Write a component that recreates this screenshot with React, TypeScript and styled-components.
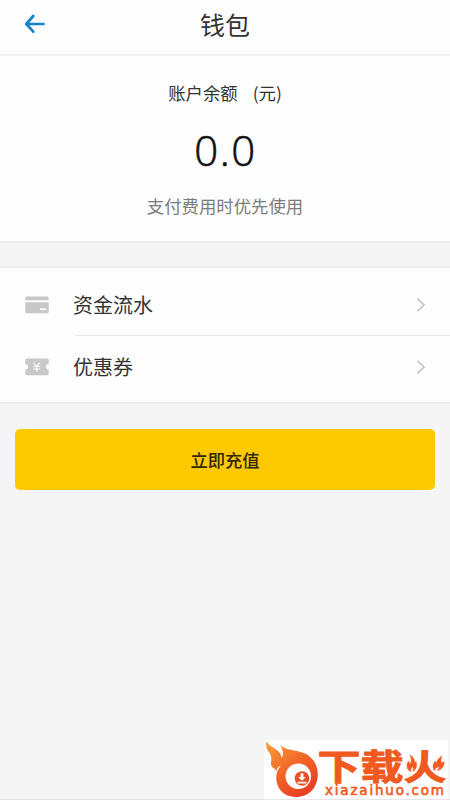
import React from "react";
import styled, { createGlobalStyle } from "styled-components";

const Global = createGlobalStyle`
  * { box-sizing: border-box; }
  body { margin: 0; background: #f5f5f5; font-family: "Noto Sans CJK SC", sans-serif; color: #333; }
`;

const Page = styled.main`
  position: relative;
  width: 450px;
  height: 800px;
  overflow: hidden;
  background: #f5f5f5;
  border-bottom: 1px solid #e6e6e6;
`;

const Header = styled.header`
  display: grid;
  grid-template-columns: 70px 1fr 70px;
  align-items: center;
  height: 56px;
  padding-bottom: 6px;
  background: #fdfdfd;
  border-bottom: 2px solid #f0f1f1;
`;

const BackButton = styled.button`
  display: flex;
  padding: 0 0 0 24px;
  border: 0;
  background: none;
`;

const Title = styled.h1`
  margin: 0;
  text-align: center;
  font-size: 25px;
  line-height: 36px;
  font-weight: 400;
`;

const Balance = styled.section`
  display: flex;
  flex-direction: column;
  align-items: center;
  height: 187px;
  padding-top: 24px;
  background: #fdfdfd;
  border-bottom: 2px solid #ececec;
`;

const BalanceLabel = styled.div`
  display: flex;
  gap: 15px;
  font-size: 17.4px;
  line-height: 26px;
`;

const Amount = styled.div`
  margin-top: 16px;
  font-family: "Open Sans", sans-serif;
  font-weight: 300;
  font-size: 42px;
  line-height: 56px;
  letter-spacing: 1.5px;
  padding-left: 1px;
  color: #111;
  -webkit-text-stroke: 0.6px #111;
`;

const Hint = styled.div`
  margin-top: 15px;
  font-size: 17.4px;
  line-height: 26px;
  color: #7c7c7c;
`;

const Menu = styled.nav`
  margin-top: 23px;
  height: 138px;
  background: #fdfdfd;
  border-top: 2px solid #ececec;
  border-bottom: 2px solid #ececec;
`;

const Row = styled.div<{ $height: number }>`
  display: flex;
  align-items: center;
  height: ${(p) => p.$height}px;
  padding-left: 25px;
`;

const RowBody = styled.div<{ $divided?: boolean }>`
  display: flex;
  flex: 1;
  align-items: center;
  justify-content: space-between;
  height: 100%;
  margin-left: 26px;
  padding: ${(p) => (p.$divided ? "7px" : "0")} 24px ${(p) => (p.$divided ? "0" : "5px")} 0;
  border-bottom: ${(p) => (p.$divided ? "1px solid #e8e8e8" : "0")};
`;

const RowIcon = styled.svg<{ $shift: number }>`
  flex: none;
  margin-top: ${(p) => p.$shift}px;
`;

const RowLabel = styled.span`
  margin-left: -2px;
  font-size: 20px;
  line-height: 30px;
`;

const RechargeButton = styled.button`
  display: block;
  width: 420px;
  height: 61px;
  margin: 25px 15px 0;
  padding: 0;
  border: 0;
  border-radius: 5px;
  background: #fdc900;
  color: #30260a;
  font-family: inherit;
  font-size: 17.3px;
  font-weight: 500;
`;

const Watermark = styled.div`
  position: absolute;
  right: 2px;
  bottom: 0;
  width: 184px;
  height: 59px;
  background: #fff;
`;

const Chevron = () => (
  <svg width="10" height="16" viewBox="0 0 10 16" fill="none" stroke="#c3c3c3" strokeWidth="1.7">
    <path d="M1.500 1.800 8 8l-6.500 6.200" />
  </svg>
);

const Logo = () => (
  <svg width="184" height="59" viewBox="264 740 184 59">
    <defs>
      <linearGradient id="fire" x1="0" y1="0" x2="0.65" y2="1">
        <stop offset="0" stopColor="#f9a13a" />
        <stop offset="0.5" stopColor="#f26a28" />
        <stop offset="1" stopColor="#e83f22" />
      </linearGradient>
    </defs>
    <path
      fill="url(#fire)"
      d="M266.300 741.500c4 5.500 9.500 6.500 13.300 11q1.800 2.500 1.900 5.500c2.800-3.500 1.200-8-1-12.700 6 5.200 14.300 4.600 22.300 7.400 9 3.100 15 11.300 15 21.500 0 13.500-9.300 22.800-21.800 22.800-13 0-19.800-9.300-19.800-19.500 0-4 1.400-7.800 4.400-11.700-3 1-4.300 3.200-3.700 5.700-2.100-4-5.500-3.800-5.800-6.800-.5-4 1.900-8.100-2.600-13.200-1.700-2-2.900-6-2.200-10z"
    />
    <circle cx="298.300" cy="776.300" r="12.800" fill="#fff" />
    <circle cx="302" cy="778.500" r="7.300" fill="#ed4d27" />
    <path fill="#fff" d="M300.600 773.300h2.800v3.600h2.500l-3.900 3.800-3.900-3.800h2.500zM297.600 781.800h8.900v1.600h-8.900z" />
    <g fill="#f15a1e" stroke="#f15a1e" fontFamily='"Noto Sans CJK SC", sans-serif' fontWeight="700">
      <g strokeWidth="0.9">
        <text x="317.500" y="780" fontSize="35" textLength="86" lengthAdjust="spacingAndGlyphs">下载</text>
        <text x="403.500" y="780" fontSize="35" textLength="43" lengthAdjust="spacingAndGlyphs">火</text>
      </g>
      <text x="325" y="795.300" fontFamily="DejaVu Sans, sans-serif" fontWeight="400" fontSize="13.500" strokeWidth="0.600" textLength="119" lengthAdjust="spacing">
        xiazaihuo.com
      </text>
    </g>
    <path fill="#fff" d="M404 754h14.500v11l-2.500 8h-12zM431 754h16v18h-12l-4-7z" />
    <g fill="#f15a1e" stroke="#f15a1e" strokeWidth="0.6">
      <path d="M411 771.500c-4.500-1-5-7-2.500-10.500l1.300 3.300c2.400-3 1.500-6.200.3-9.300 4.500 3 4.800 6 4.200 8.500l1.700-2c1.500 5-.5 8.500-3 10 1-3 0-4-.7-5.500-.5 2-2 2.500-1.300 5.500z" />
      <path d="M434.500 770.500c-2.500-4-1.200-7.500 1-9.500l.6 2.800c1-4 3-5.800 5.700-7.800-1.200 3.500-1 5.500-.4 7l2.600-1.500c.5 5-2.500 8.500-7 9 2-1.500 2.300-3 2-4.500-1.500 2-3.800 1.500-4.500 4.500z" />
    </g>
  </svg>
);

export default function App() {
  return (
    <>
      <Global />
      <Page>
        <Header>
          <BackButton aria-label="返回">
            <svg width="22" height="20" viewBox="0 0 22 20" fill="none" stroke="#1682c9" strokeWidth="2.700" strokeLinecap="round" strokeLinejoin="round">
              <path d="M9.300 2 2.300 10l7 7.700M2.500 10h17" />
            </svg>
          </BackButton>
          <Title>钱包</Title>
        </Header>
        <Balance>
          <BalanceLabel><span>账户余额</span><span>(元)</span></BalanceLabel>
          <Amount>0.0</Amount>
          <Hint>支付费用时优先使用</Hint>
        </Balance>
        <Menu>
          <Row $height={68}>
            <RowIcon $shift={5} width="24" height="18" viewBox="0 0 24 18" fill="#c8c8c8">
              <path d="M2 .5h20q1.700 0 1.700 1.700v2H.3v-2Q.3.500 2 .500zM.3 6.200h23.400v9.300q0 1.700-1.700 1.700H2q-1.700 0-1.700-1.700z" />
              <path d="M15 12.500h6v1.600h-6z" fill="#fff" />
            </RowIcon>
            <RowBody $divided><RowLabel>资金流水</RowLabel><Chevron /></RowBody>
          </Row>
          <Row $height={66}>
            <RowIcon $shift={-5} width="24" height="18" viewBox="0 0 24 18" fill="#c8c8c8">
              <path d="M2 .5h20q1.700 0 1.700 1.700v4a2.800 2.800 0 0 0 0 5.600v3.700q0 1.700-1.700 1.700H2q-1.700 0-1.700-1.700v-3.700a2.800 2.800 0 0 0 0-5.600v-4Q.3.500 2 .500z" />
              <path d="m8.500 4.500 3.300 3.700 3.200-3.700M8.300 8.500h7M8.300 11h7M11.800 8.200v5.600" fill="none" stroke="#fff" strokeWidth="1.100" />
            </RowIcon>
            <RowBody><RowLabel>优惠券</RowLabel><Chevron /></RowBody>
          </Row>
        </Menu>
        <RechargeButton>立即充值</RechargeButton>
        <Watermark><Logo /></Watermark>
      </Page>
    </>
  );
}
